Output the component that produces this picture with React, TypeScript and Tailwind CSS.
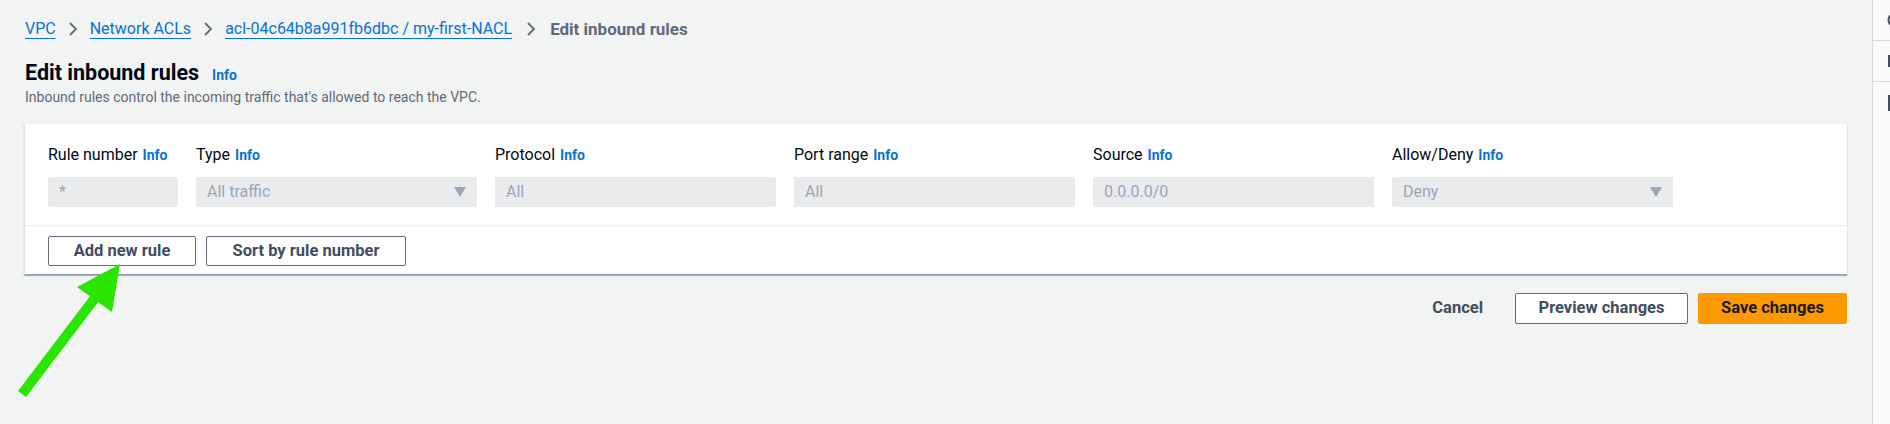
import React from "react";

const font = { fontFamily: "Roboto, 'Liberation Sans', sans-serif" };

function Chevron() {
  return (
    <svg width="10" height="16" viewBox="0 0 10 16" className="mx-[12px] shrink-0">
      <polyline points="2,2 8,8 2,14" fill="none" stroke="#5f6b7a" strokeWidth="1.8" />
    </svg>
  );
}

function Info() {
  return <span className="text-[14px] font-bold text-[#0972d3] ml-[5px]">Info</span>;
}

function Caret() {
  return (
    <svg width="12" height="10" viewBox="0 0 12 10" className="shrink-0">
      <polygon points="0,0 12,0 6,10" fill="#9ba7b6" />
    </svg>
  );
}

function Field({ label, value, select, w }: { label: string; value: string; select?: boolean; w: string }) {
  return (
    <div className={`flex flex-col ${w}`}>
      <div className="h-[22px] leading-[22px] text-[16px] text-[#000716] whitespace-nowrap">
        {label}
        <Info />
      </div>
      <div className="mt-[11px] h-[30px] rounded-[2px] bg-[#e9ebed] flex items-center justify-between pl-[11px] pr-[11px] text-[16px] text-[#9ba7b6]">
        <span>{value}</span>
        {select && <Caret />}
      </div>
    </div>
  );
}

export default function App() {
  return (
    <div className="w-[1890px] h-[424px] bg-[#f2f3f3] flex overflow-hidden relative" style={font}>
      <div className="w-[1872px] shrink-0 pl-[24px] pr-[25px]">
        {/* Breadcrumbs */}
        <div className="pt-[17px] h-[41px] flex items-center text-[16px] leading-[24px]">
          <span className="text-[#0972d3] underline underline-offset-[4px] decoration-1 pl-[1px]">VPC</span>
          <Chevron />
          <span className="text-[#0972d3] underline underline-offset-[4px] decoration-1">Network ACLs</span>
          <Chevron />
          <span className="text-[#0972d3] underline underline-offset-[4px] decoration-1">acl-04c64b8a991fb6dbc / my-first-NACL</span>
          <svg width="10" height="16" viewBox="0 0 10 16" className="ml-[14px] mr-[14px] shrink-0">
            <polyline points="2,2 8,8 2,14" fill="none" stroke="#5f6b7a" strokeWidth="1.8" />
          </svg>
          <span className="text-[#5f6b7a] font-bold text-[17px]">Edit inbound rules</span>
        </div>

        {/* Header */}
        <div className="mt-[18px] flex items-baseline h-[28px] leading-[28px]">
          <span className="text-[21.5px] font-bold text-[#000716] pl-[1px]">Edit inbound rules</span>
          <span className="text-[14px] font-bold text-[#0972d3] ml-[13px]">Info</span>
        </div>
        <div className="text-[14px] leading-[20px] text-[#5f6b7a] pl-[1px]">
          Inbound rules control the incoming traffic that's allowed to reach the VPC.
        </div>

        {/* Panel */}
        <div className="mt-[17px] bg-white border-l border-[#e1e4e6] border-b border-b-[#8d99a8] shadow-[0_1px_1px_rgba(0,28,36,0.3)]">
          <div className="pt-[20px] pb-[18px] pl-[23px] flex gap-[18px]">
            <Field label="Rule number" value="*" w="w-[130px]" />
            <Field label="Type" value="All traffic" select w="w-[281px]" />
            <Field label="Protocol" value="All" w="w-[281px]" />
            <Field label="Port range" value="All" w="w-[281px]" />
            <Field label="Source" value="0.0.0.0/0" w="w-[281px]" />
            <Field label="Allow/Deny" value="Deny" select w="w-[281px]" />
          </div>
          <div className="h-px bg-[#e9ebed]" />
          <div className="pt-[10px] pb-[8px] pl-[23px] flex gap-[10px]">
            <button className="w-[148px] h-[30px] border border-[#5f6b7a] rounded-[2px] text-[16.5px] font-bold text-[#414d5c] bg-white">
              Add new rule
            </button>
            <button className="w-[200px] h-[30px] border border-[#5f6b7a] rounded-[2px] text-[16.5px] font-bold text-[#414d5c] bg-white">
              Sort by rule number
            </button>
          </div>
        </div>

        {/* Footer */}
        <div className="mt-[18px] flex justify-end items-center gap-[10px]">
          <button className="h-[31px] px-[22px] text-[16.5px] font-bold text-[#414d5c]">Cancel</button>
          <button className="h-[31px] w-[173px] border border-[#5f6b7a] rounded-[2px] bg-white text-[16.5px] font-bold text-[#414d5c]">
            Preview changes
          </button>
          <button className="h-[31px] w-[149px] rounded-[2px] bg-[#ff9900] text-[16.5px] font-bold text-[#16191f]">
            Save changes
          </button>
        </div>
      </div>

      {/* Right side rail */}
      <div className="flex-1 border-l border-[#d5dbdb] bg-[#fafafa] flex flex-col">
        <div className="h-[41px] border-b border-[#d5dbdb] flex items-center pl-[14px]">
          <svg width="10" height="16" viewBox="0 0 10 16">
            <circle cx="8" cy="8" r="6.5" fill="none" stroke="#414d5c" strokeWidth="2" />
          </svg>
        </div>
        <div className="h-[41px] border-b border-[#d5dbdb] flex items-center pl-[15px]">
          <svg width="8" height="12" viewBox="0 0 8 12">
            <rect x="1" y="1" width="8" height="10" fill="none" stroke="#414d5c" strokeWidth="2" />
          </svg>
        </div>
        <div className="h-[41px] flex items-center pl-[15px]">
          <svg width="8" height="16" viewBox="0 0 8 16">
            <rect x="1" y="1" width="10" height="14" fill="none" stroke="#414d5c" strokeWidth="2" />
          </svg>
        </div>
      </div>

      {/* Green annotation arrow */}
      <svg className="absolute left-0 top-0 pointer-events-none" width="1890" height="424" viewBox="0 0 1890 424">
        <line x1="22" y1="394" x2="98" y2="294" stroke="#29e600" strokeWidth="10" />
        <polygon points="120,264 77,287 112,312" fill="#29e600" />
      </svg>
    </div>
  );
}
